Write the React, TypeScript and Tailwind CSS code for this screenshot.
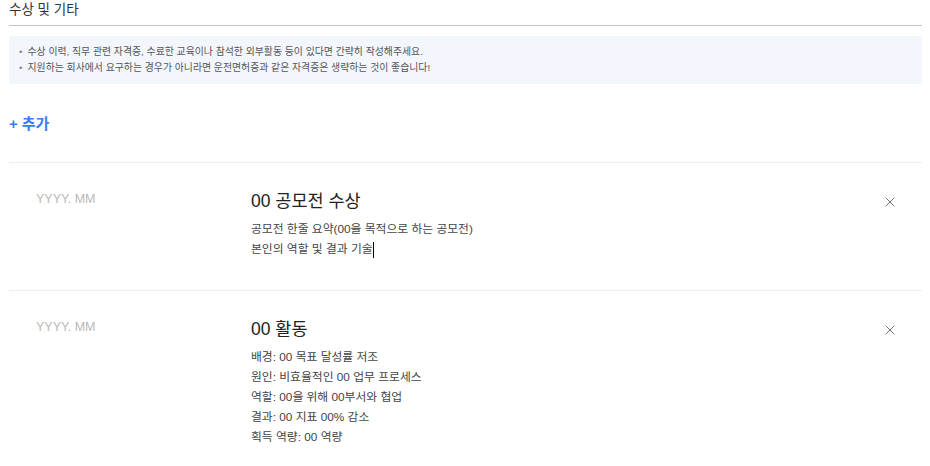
import { X } from "lucide-react";

type Entry = {
  date: string;
  title: string;
  lines: string[];
};

const entries: Entry[] = [
  {
    date: "YYYY. MM",
    title: "00 공모전 수상",
    lines: ["공모전 한줄 요약(00을 목적으로 하는 공모전)", "본인의 역할 및 결과 기술"],
  },
  {
    date: "YYYY. MM",
    title: "00 활동",
    lines: [
      "배경: 00 목표 달성률 저조",
      "원인: 비효율적인 00 업무 프로세스",
      "역할: 00을 위해 00부서와 협업",
      "결과: 00 지표 00% 감소",
      "획득 역량: 00 역량",
    ],
  },
];

const tips = [
  "수상 이력, 직무 관련 자격증, 수료한 교육이나 참석한 외부활동 등이 있다면 간략히 작성해주세요.",
  "지원하는 회사에서 요구하는 경우가 아니라면 운전면허증과 같은 자격증은 생략하는 것이 좋습니다!",
];

export default function App() {
  return (
    <div
      className="w-[930px] h-[466px] overflow-hidden bg-white px-[9px] text-[#222]"
      style={{ fontFamily: '"Liberation Sans", "Noto Sans CJK KR", sans-serif' }}
    >
      <h2 className="pb-[5px] text-[13.5px] leading-[20px] text-[#333] border-b border-[#c4c4c4] w-[913px]">
        수상 및 기타
      </h2>

      <div className="mt-[10px] w-[913px] bg-[#f3f7fd] px-[10px] py-[8px] text-[9.9px] leading-[16px] text-[#555]">
        {tips.map((t, i) => (
          <p key={i} className="flex gap-[5px]">
            <span className="text-[#888]">•</span>
            <span>{t}</span>
          </p>
        ))}
      </div>

      <button className="mt-[30px] flex items-center gap-[4px] text-[15px] font-semibold leading-[20px] text-[#3a7bf7]">
        <span>+</span>
        <span>추가</span>
      </button>

      <div className="mt-[28px] w-[913px]">
        {entries.map((e, i) => (
          <div key={i} className="flex border-t border-[#ececec] pt-[26px] pb-[31px]">
            <div className="w-[242px] pl-[27px] pt-[2px] text-[12.5px] leading-[16px] text-[#b8b8b8]">
              {e.date}
            </div>
            <div className="flex-1">
              <div className="text-[17.5px] leading-[24px] text-[#222]">{e.title}</div>
              <div className="mt-[6px] text-[11.8px] leading-[20px] text-[#444]">
                {e.lines.map((l, j) => (
                  <div key={j}>
                    {l}
                    {i === 0 && j === e.lines.length - 1 && (
                      <span className="inline-block w-[1px] h-[16px] bg-black align-middle" />
                    )}
                  </div>
                ))}
              </div>
            </div>
            <div className="w-[45px] pl-[4.5px] pt-[5px]">
              <X size={16} strokeWidth={1.5} className="text-[#777]" />
            </div>
          </div>
        ))}
      </div>
    </div>
  );
}
